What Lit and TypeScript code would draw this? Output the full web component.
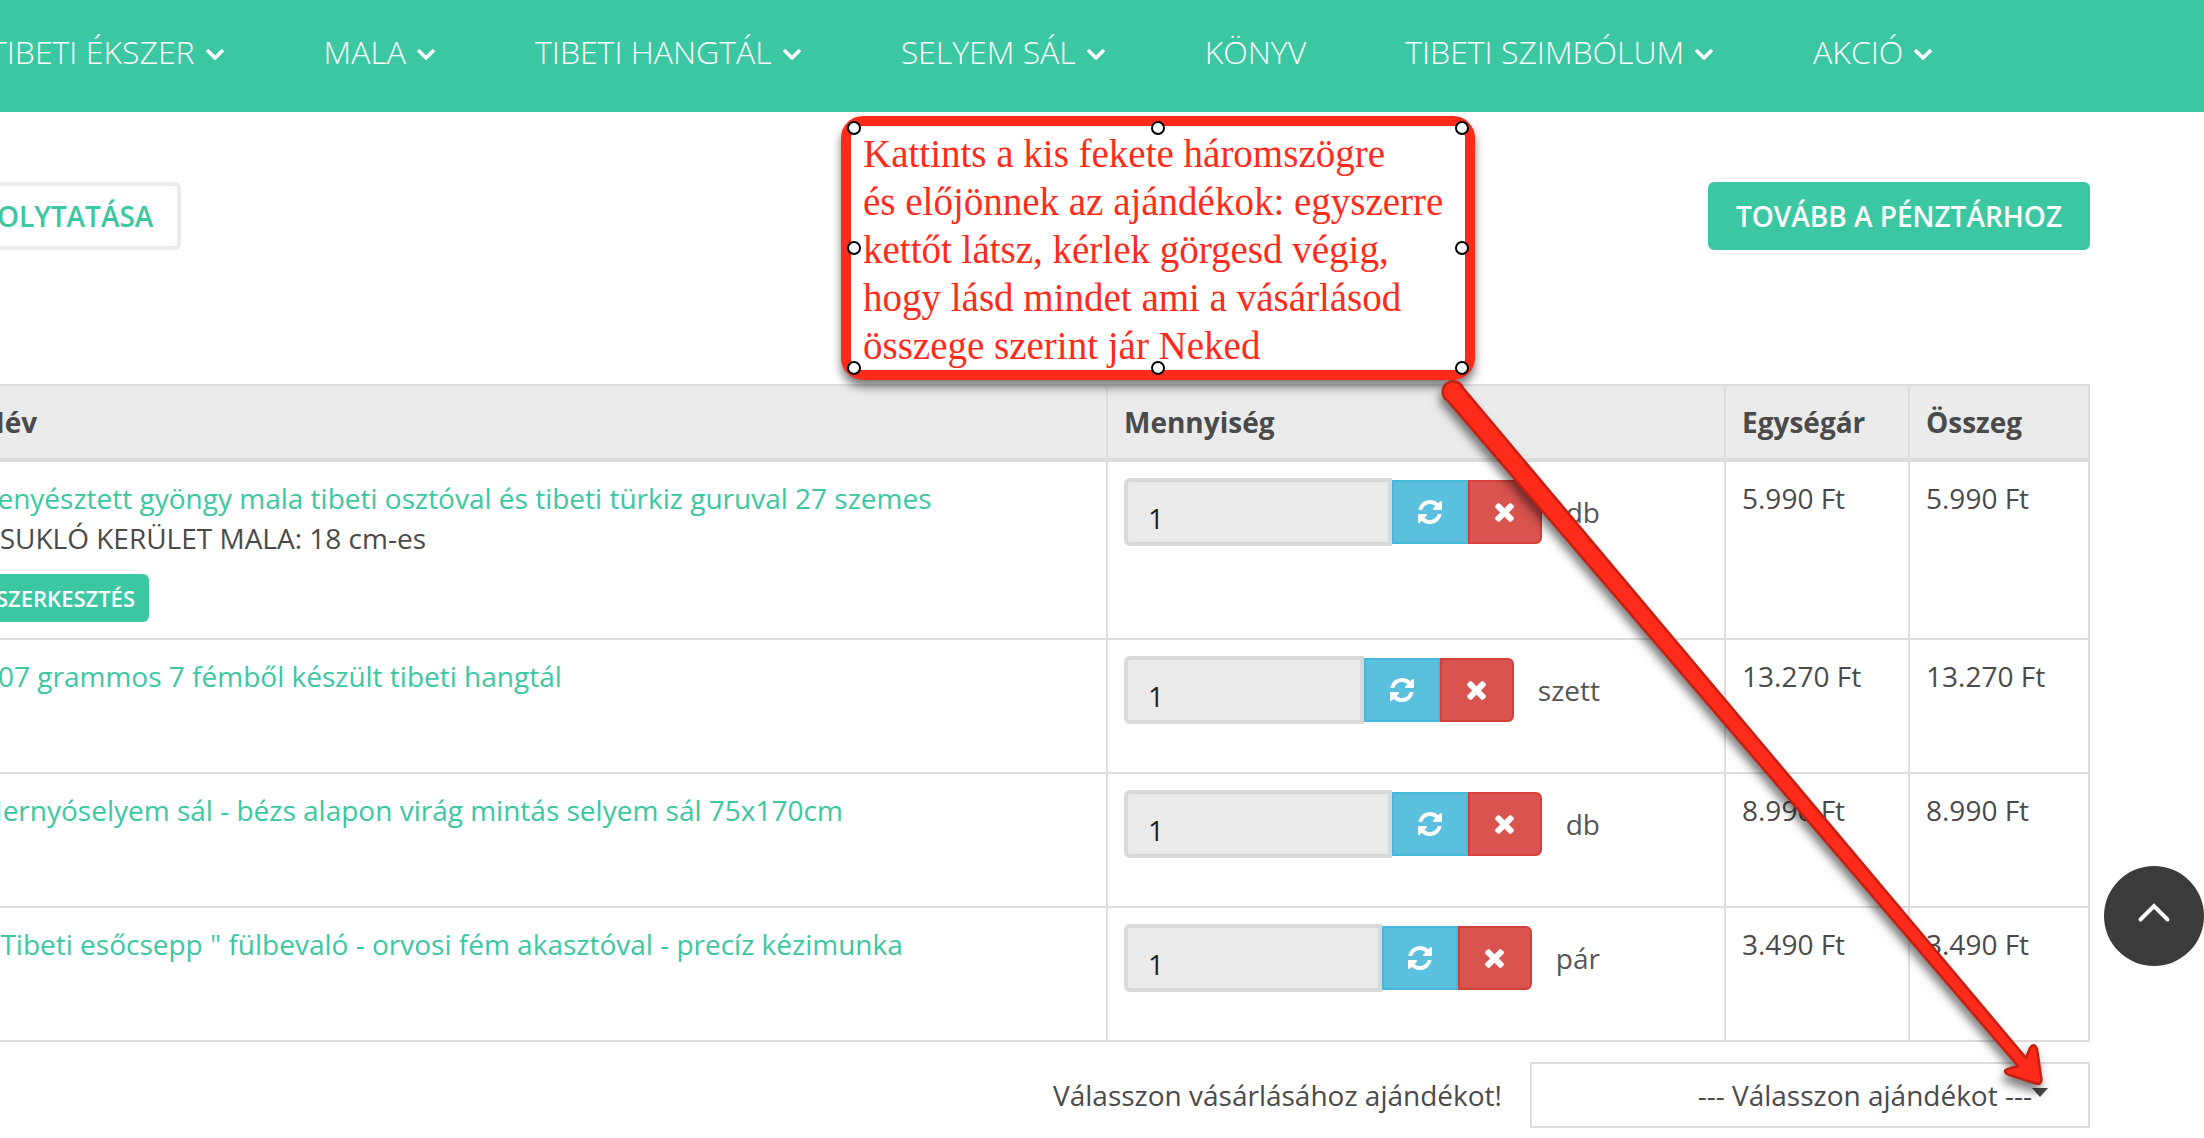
import { LitElement, html, css, svg, nothing } from "lit";
import { customElement, property } from "lit/decorators.js";

interface NavItem {
  label: string;
  menu: boolean;
}

interface CartItem {
  id: string;
  name: string;
  option?: string;
  qty: number;
  unit: string;
  price: string;
  total: string;
}

const NAV: NavItem[] = [
  { label: "TIBETI ÉKSZER", menu: true },
  { label: "MALA", menu: true },
  { label: "TIBETI HANGTÁL", menu: true },
  { label: "SELYEM SÁL", menu: true },
  { label: "KÖNYV", menu: false },
  { label: "TIBETI SZIMBÓLUM", menu: true },
  { label: "AKCIÓ", menu: true },
];

const ITEMS: CartItem[] = [
  {
    id: "mala",
    name: "Tenyésztett gyöngy mala tibeti osztóval és tibeti türkiz guruval 27 szemes",
    option: "CSUKLÓ KERÜLET MALA: 18 cm-es",
    qty: 1,
    unit: "db",
    price: "5.990 Ft",
    total: "5.990 Ft",
  },
  {
    id: "hangtal",
    name: "507 grammos 7 fémből készült tibeti hangtál",
    qty: 1,
    unit: "szett",
    price: "13.270 Ft",
    total: "13.270 Ft",
  },
  {
    id: "sal",
    name: "Hernyóselyem sál - bézs alapon virág mintás selyem sál 75x170cm",
    qty: 1,
    unit: "db",
    price: "8.990 Ft",
    total: "8.990 Ft",
  },
  {
    id: "fulbevalo",
    name: '" Tibeti esőcsepp " fülbevaló - orvosi fém akasztóval - precíz kézimunka',
    qty: 1,
    unit: "pár",
    price: "3.490 Ft",
    total: "3.490 Ft",
  },
];

const NOTE = [
  "Kattints a kis fekete háromszögre",
  "és előjönnek az ajándékok: egyszerre",
  "kettőt látsz, kérlek görgesd végig,",
  "hogy lásd mindet ami a vásárlásod",
  "összege szerint jár Neked",
];

const REFRESH = svg`<path fill="currentColor" d="M1511 928q0 5-1 7-64 268-268 434.500t-478 166.500q-146 0-282.500-55t-243.500-157l-129 129q-19 19-45 19t-45-19-19-45v-448q0-26 19-45t45-19h448q26 0 45 19t19 45-19 45l-137 137q71 66 161 102t187 36q134 0 250-65t186-179q11-17 53-117 8-23 30-23h192q13 0 22.500 9.500t9.500 22.500zm25-800v448q0 26-19 45t-45 19h-448q-26 0-45-19t-19-45 19-45l138-138q-148-137-349-137-134 0-250 65t-186 179q-11 17-53 117-8 23-30 23h-199q-13 0-22.500-9.500t-9.500-22.500v-7q65-268 270-434.500t480-166.500q146 0 284 55.500t245 156.500l130-129q19-19 45-19t45 19 19 45z"/>`;

const TIMES = svg`<path fill="currentColor" d="M1490 1322q0 40-28 68l-136 136q-28 28-68 28t-68-28l-294-294-294 294q-28 28-68 28t-68-28l-136-136q-28-28-28-68t28-68l294-294-294-294q-28-28-28-68t28-68l136-136q28-28 68-28t68 28l294 294 294-294q28-28 68-28t68 28l136 136q28 28 28 68t-28 68l-294 294 294 294q28 28 28 68z"/>`;

@customElement("shop-nav")
export class ShopNav extends LitElement {
  static styles = css`
    :host {
      display: block;
      background: #3bc7a2;
    }
    .bar {
      display: flex;
      gap: 99px;
      box-sizing: border-box;
      height: 112px;
      padding-top: 28px;
      margin-left: -10px;
      overflow: hidden;
    }
    .link {
      display: flex;
      flex: none;
      gap: 10px;
      height: 48px;
      line-height: 48px;
      font-size: 32px;
      font-weight: 300;
      color: #fff;
      text-decoration: none;
      white-space: nowrap;
    }
    .chevron {
      width: 20px;
      height: 12px;
      margin-top: 20px;
    }
  `;

  render() {
    return html`<nav class="bar">
      ${NAV.map(
        (n) => html`<a class="link" href="#"
          ><span>${n.label}</span>${n.menu
            ? html`<svg class="chevron" viewBox="0 0 20 12" aria-hidden="true">
                <path d="M2 2 L10 10 L18 2" fill="none" stroke="#fff" stroke-width="3.6" />
              </svg>`
            : nothing}</a
        >`
      )}
    </nav>`;
  }
}

@customElement("qty-field")
export class QtyField extends LitElement {
  @property({ type: Number }) value = 1;
  @property() unit = "";

  static styles = css`
    :host {
      display: block;
      max-width: 476px;
      margin-bottom: 32px;
    }
    .group {
      display: flex;
      align-items: center;
    }
    .input {
      flex: 1;
      min-width: 0;
      box-sizing: border-box;
      height: 68px;
      padding: 12px 20px 0;
      border: 4px solid #d9d9d9;
      border-radius: 6px 0 0 6px;
      background: #ebebeb;
      color: #222;
      font: inherit;
    }
    .btn {
      display: flex;
      flex: none;
      align-items: center;
      justify-content: center;
      box-sizing: border-box;
      height: 64px;
      padding: 0;
      border: 2px solid;
      color: #fff;
    }
    .update {
      width: 76px;
      background: #5bc0de;
      border-color: #46b8da;
    }
    .remove {
      width: 74px;
      background: #d9534f;
      border-color: #d43f3a;
      border-radius: 0 6px 6px 0;
    }
    .refresh {
      width: 24px;
      height: 24px;
    }
    .times {
      width: 19px;
      height: 19px;
    }
    .unit {
      padding-left: 24px;
      color: #555;
    }
  `;

  render() {
    return html`<div class="group">
      <input class="input" id="qty" type="text" aria-label="Mennyiség" .value=${String(this.value)} />
      <button class="btn update" type="button" aria-label="Frissítés">
        <svg class="refresh" viewBox="0 0 1536 1536">${REFRESH}</svg>
      </button>
      <button class="btn remove" type="button" aria-label="Törlés">
        <svg class="times" viewBox="302 366 1188 1188">${TIMES}</svg>
      </button>
      <label class="unit" for="qty">${this.unit}</label>
    </div>`;
  }
}

@customElement("cart-table")
export class CartTable extends LitElement {
  static styles = css`
    :host {
      display: block;
    }
    .table {
      width: 100%;
      table-layout: fixed;
      border-collapse: separate;
      border-spacing: 0;
    }
    .col-qty {
      width: 618px;
    }
    .col-price {
      width: 184px;
    }
    .col-total {
      width: 180px;
    }
    .head,
    .cell {
      box-sizing: border-box;
      padding: 16px;
      border-right: 2px solid #ddd;
      border-bottom: 2px solid #ddd;
      text-align: left;
      vertical-align: top;
    }
    .head {
      border-top: 2px solid #ddd;
      border-bottom-width: 4px;
      background: #ebebeb;
      font-weight: 700;
    }
    .name {
      padding-left: 28px;
    }
    .product {
      color: #3bc7a2;
      text-decoration: none;
    }
    .edit {
      display: block;
      box-sizing: border-box;
      height: 48px;
      margin-top: 16px;
      padding: 0 14px;
      border: 0;
      border-radius: 6px;
      background: #3bc7a2;
      color: #fff;
      font: inherit;
      font-size: 22px;
      font-weight: 600;
    }
  `;

  render() {
    return html`<table class="table">
      <colgroup>
        <col />
        <col class="col-qty" />
        <col class="col-price" />
        <col class="col-total" />
      </colgroup>
      <thead>
        <tr>
          <th class="head name">Név</th>
          <th class="head">Mennyiség</th>
          <th class="head">Egységár</th>
          <th class="head">Összeg</th>
        </tr>
      </thead>
      <tbody>
        ${ITEMS.map(
          (i) => html`<tr>
            <td class="cell name">
              <a class="product" href="#${i.id}">${i.name}</a>
              ${i.option
                ? html`<div>${i.option}</div>
                    <button class="edit" type="button">SZERKESZTÉS</button>`
                : nothing}
            </td>
            <td class="cell"><qty-field .value=${i.qty} .unit=${i.unit}></qty-field></td>
            <td class="cell">${i.price}</td>
            <td class="cell">${i.total}</td>
          </tr>`
        )}
      </tbody>
    </table>`;
  }
}

@customElement("note-callout")
export class NoteCallout extends LitElement {
  static styles = css`
    :host {
      display: block;
    }
    .box {
      box-sizing: border-box;
      width: 634px;
      height: 264px;
      padding: 4px 12px 0;
      border: 10px solid #ff2b1a;
      border-radius: 22px;
      background: #fff;
      box-shadow: 0 7px 10px rgba(0, 0, 0, 0.5);
      color: #ff2b1a;
      font-family: "Palatino Linotype", Palatino, "Liberation Serif", serif;
      font-size: 39px;
      line-height: 48px;
      white-space: nowrap;
    }
    .line {
      margin: 0;
    }
    .handles {
      position: absolute;
      inset: 0;
      width: 634px;
      height: 264px;
    }
  `;

  render() {
    return html`<div class="box">${NOTE.map((l) => html`<p class="line">${l}</p>`)}</div>
      <svg class="handles" viewBox="0 0 634 264" aria-hidden="true">
        ${[12, 132, 252].map((y) =>
          [13, 317, 621]
            .filter((x) => !(x === 317 && y === 132))
            .map((x) => svg`<circle cx=${x} cy=${y} r="6" fill="#fff" stroke="#000" stroke-width="2"/>`)
        )}
      </svg>`;
  }
}

@customElement("app-root")
export class AppRoot extends LitElement {
  static styles = css`
    :host {
      display: block;
      position: relative;
      min-height: 100vh;
      overflow: hidden;
      background: #fff;
      color: #4a4a4a;
      font-family: "Open Sans", "Noto Sans", sans-serif;
      font-size: 28px;
      line-height: 40px;
    }
    .page {
      margin: 0 114px 0 -46px;
      padding: 70px 0 10px;
    }
    .actions {
      display: flex;
      justify-content: space-between;
      margin-bottom: 134px;
    }
    .action {
      box-sizing: border-box;
      height: 68px;
      padding: 0 24px;
      border: 4px solid #3bc7a2;
      border-radius: 6px;
      background: #3bc7a2;
      color: #fff;
      font: inherit;
      font-weight: 600;
    }
    .back {
      border-color: #ebebeb;
      background: #fff;
      color: #3bc7a2;
    }
    .gift {
      display: flex;
      align-items: center;
      justify-content: flex-end;
      gap: 28px;
      margin-top: 20px;
    }
    .pick {
      position: relative;
      width: 560px;
    }
    .select {
      display: block;
      box-sizing: border-box;
      width: 100%;
      height: 66px;
      padding: 0 56px 0 16px;
      border: 2px solid #ddd;
      border-radius: 0;
      appearance: none;
      background: #fff;
      color: inherit;
      font: inherit;
      text-align: right;
      text-align-last: right;
    }
    .caret {
      position: absolute;
      top: 26px;
      right: 42px;
      width: 16px;
      height: 9px;
      pointer-events: none;
    }
    .note {
      position: absolute;
      top: 116px;
      left: 841px;
    }
    .arrow {
      position: absolute;
      top: 370px;
      left: 1420px;
      width: 660px;
      height: 740px;
      pointer-events: none;
      filter: drop-shadow(-2px 7px 5px rgba(0, 0, 0, 0.5));
    }
    .top {
      position: absolute;
      top: 866px;
      right: 0;
      width: 100px;
      height: 100px;
      padding: 0;
      border: 0;
      border-radius: 50%;
      background: #3c3b39;
    }
    .up {
      display: block;
      width: 100px;
      height: 100px;
    }
  `;

  render() {
    return html`
      <shop-nav></shop-nav>
      <main class="page">
        <div class="actions">
          <button class="action back" type="button">FOLYTATÁSA</button>
          <button class="action" type="button">TOVÁBB A PÉNZTÁRHOZ</button>
        </div>
        <cart-table></cart-table>
        <div class="gift">
          <label for="gift">Válasszon vásárlásához ajándékot!</label>
          <div class="pick">
            <select class="select" id="gift">
              <option>--- Válasszon ajándékot ---</option>
            </select>
            <svg class="caret" viewBox="0 0 16 9" aria-hidden="true"><path d="M0 0H16L8 9Z" fill="#4a4a4a" /></svg>
          </div>
        </div>
      </main>
      <button class="top" type="button" aria-label="Vissza a tetejére">
        <svg class="up" viewBox="0 0 100 100">
          <path d="M36.500 53.500 L50 40 L63.500 53.500" fill="none" stroke="#fff" stroke-width="4" stroke-linecap="round" />
        </svg>
      </button>
      <note-callout class="note"></note-callout>
      <svg class="arrow" viewBox="1420 370 660 740" aria-hidden="true">
        <path
          d="M1448 401 A10.500 10.500 0 1 1 1463 388 L2026 1058 L2030 1048 Q2034 1042 2037 1049 L2041.500 1080 Q2041 1085 2036 1083.500 L2008 1074.500 Q2002 1071 2008 1069 L2018 1066 Z"
          fill="#ff2b1a"
          stroke="#c41f10"
          stroke-width="2.500"
          stroke-linejoin="round"
        />
      </svg>
    `;
  }
}
